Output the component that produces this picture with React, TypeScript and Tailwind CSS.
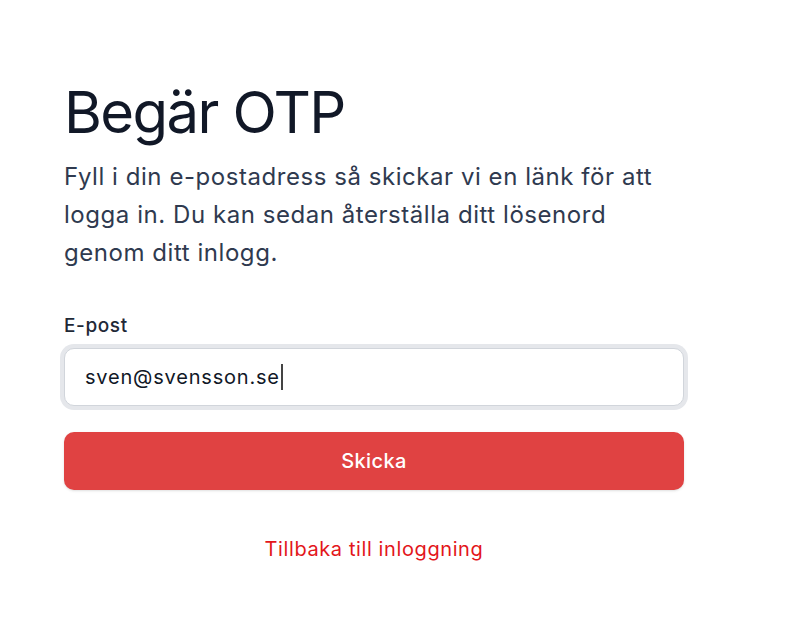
import React from "react";

export default function App() {
  return (
    <div
      className="min-h-[618px] w-[804px] bg-white pl-16 pt-[76px]"
      style={{ fontFamily: '"Inter", "Noto Sans", sans-serif' }}
    >
      <div className="w-[620px]">
        <h1 className="text-[58px] leading-[72px] font-normal text-[#111827] tracking-[-1.6px]">
          Begär OTP
        </h1>
        <p className="mt-[10px] text-[24px] leading-[38px] text-[#2f3a4f] tracking-[0.55px] w-[610px]">
          Fyll i din e-postadress så skickar vi en länk för att logga in. Du kan sedan återställa ditt lösenord genom ditt inlogg.
        </p>
        <label className="mt-[40px] block text-[19px] leading-[28px] font-medium text-[#1f2937] tracking-[0.6px]">
          E-post
        </label>
        <div className="mt-[8px] flex items-center">
          <div className="w-full rounded-[10px] border border-[#d1d5db] bg-white px-5 h-[58px] flex items-center ring-4 ring-[#e5e7eb] text-[20px] text-[#111827] tracking-[0.8px]">
            sven@svensson.se
            <span className="ml-[1px] inline-block h-[26px] w-[2px] bg-[#444]" />
          </div>
        </div>
        <button className="mt-[26px] h-[58px] w-full rounded-[10px] bg-[#e04242] text-white text-[20px] font-medium tracking-[0.4px] shadow-sm">
          Skicka
        </button>
        <div className="mt-[44px] text-center">
          <a className="text-[20px] text-[#e3161b] tracking-[0.6px]">Tillbaka till inloggning</a>
        </div>
      </div>
    </div>
  );
}
